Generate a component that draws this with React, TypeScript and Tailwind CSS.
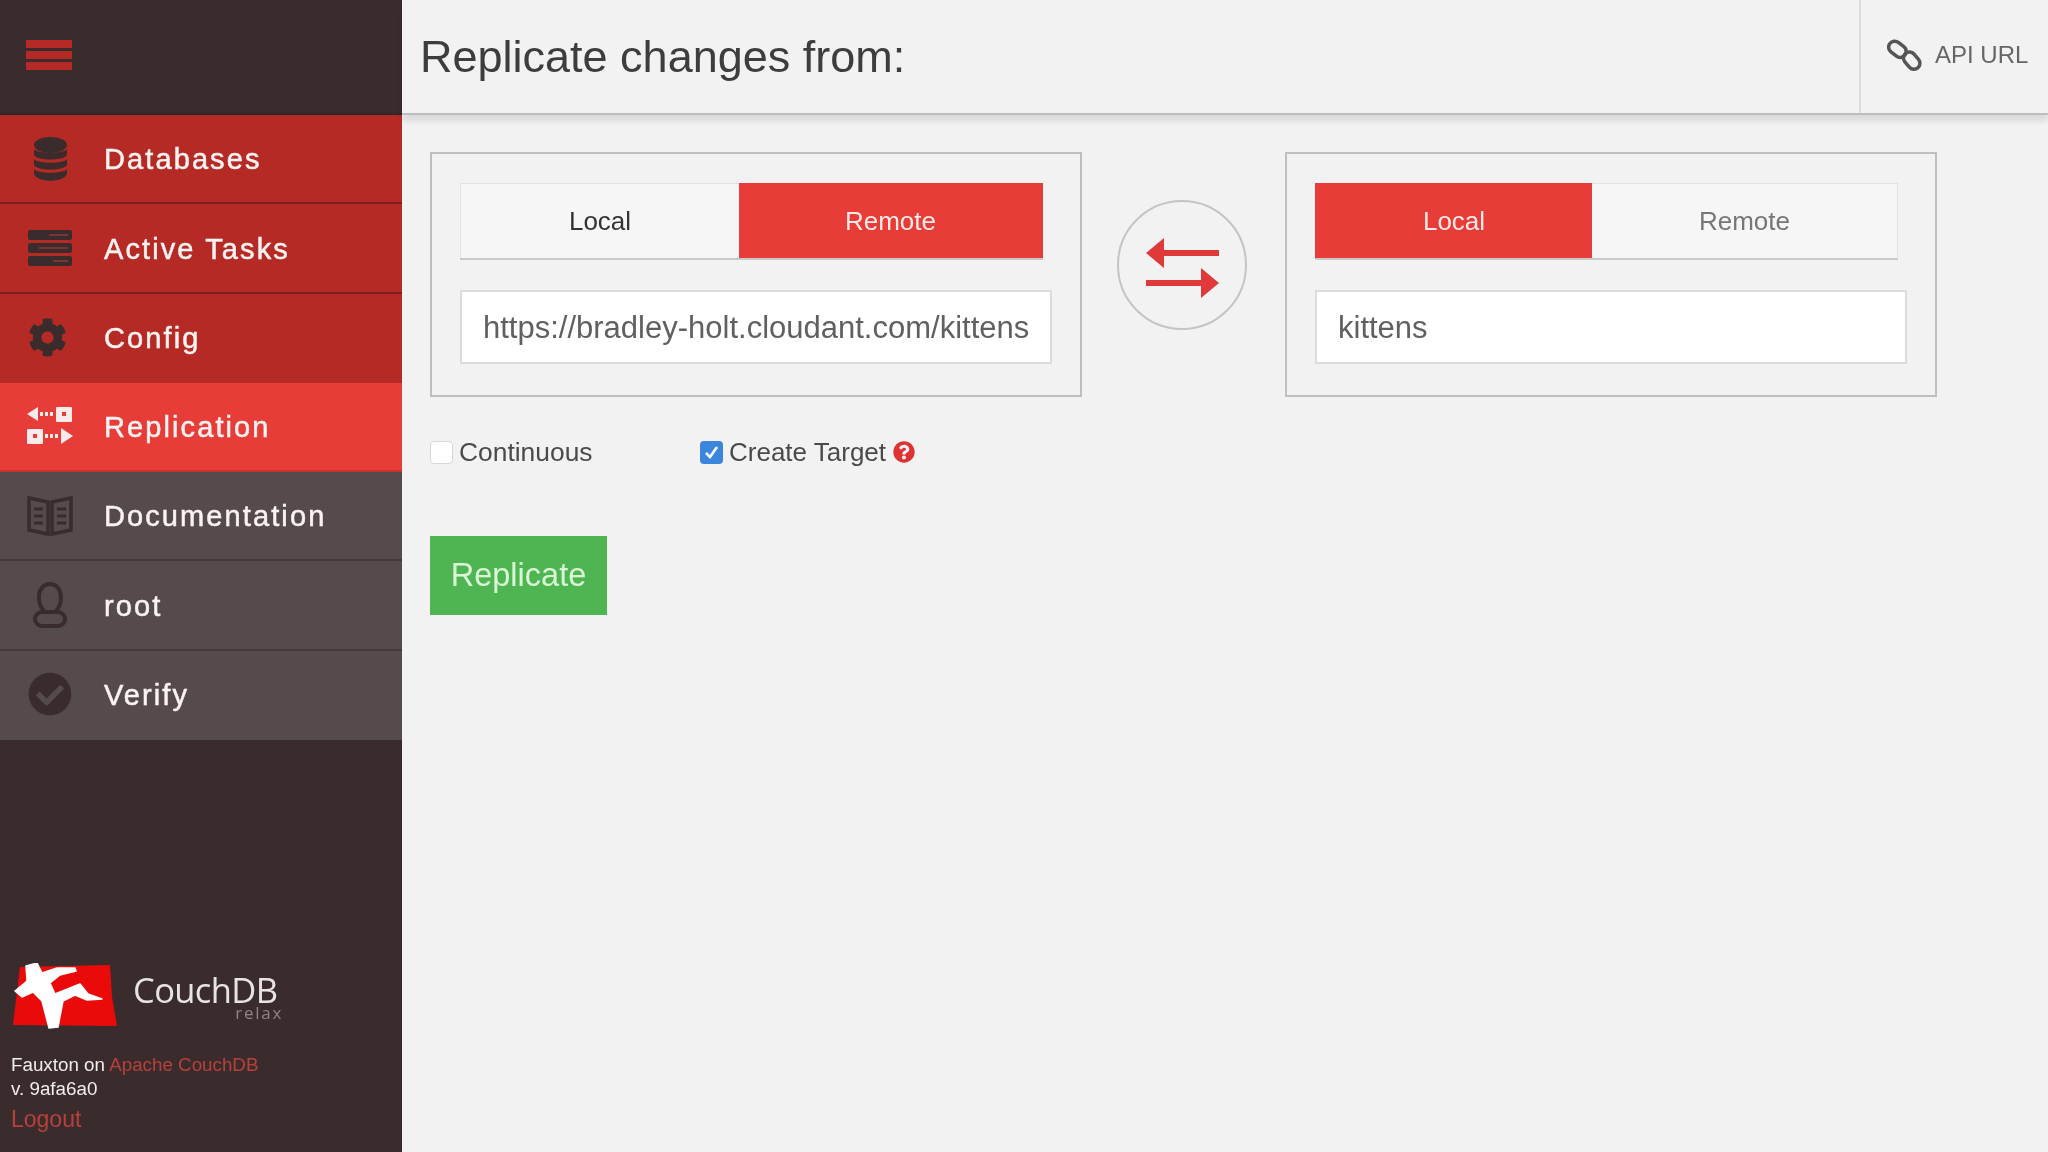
import type { ReactNode } from "react";
import { FaCheckCircle, FaCog, FaQuestionCircle } from "react-icons/fa";

const ink = "#3a2c2c";

function DatabaseIcon() {
  return (
    <svg width="33" height="44" viewBox="0 0 33 44" fill={ink}>
      <ellipse cx="16.5" cy="8" rx="16.5" ry="8" />
      <path d="M0 12c3 5 30 5 33 0v6c-3 6-30 6-33 0z" />
      <path d="M0 22c3 5 30 5 33 0v6c-3 6-30 6-33 0z" />
      <path d="M0 32c3 5 30 5 33 0v5c-3 9-30 9-33 0z" />
    </svg>
  );
}

function TasksIcon() {
  return (
    <svg width="46" height="36" viewBox="0 0 46 36" fill={ink}>
      <rect x="1" y="0" width="44" height="10" rx="2" />
      <rect x="1" y="13" width="44" height="10" rx="2" />
      <rect x="1" y="26" width="44" height="10" rx="2" />
      <path d="M22 5h19M12 18h29M26 31h15" stroke="#8f3a34" strokeWidth="1.5" />
    </svg>
  );
}

function ReplicationIcon() {
  return (
    <svg width="46" height="38" viewBox="0 0 46 38" fill="#fbeaea">
      <path d="M0 7 11 0v14z" />
      <rect x="29" y="0" width="16" height="15" rx="1" />
      <rect x="35" y="5" width="4" height="4" fill="#e73c37" />
      <path d="M13 7h14" stroke="#fbeaea" strokeWidth="4" strokeDasharray="3 2" />
      <rect x="0" y="22" width="16" height="15" rx="1" />
      <rect x="6" y="27" width="4" height="4" fill="#e73c37" />
      <path d="M18 29h14" stroke="#fbeaea" strokeWidth="4" strokeDasharray="3 2" />
      <path d="M46 29 34 21v16z" />
    </svg>
  );
}

function BookIcon() {
  return (
    <svg width="46" height="42" viewBox="0 0 46 42" fill="none" stroke={ink} strokeWidth="3.5">
      <path d="M2 3 21 7v32L2 35zM44 3 25 7v32l19-4z" />
      <path d="M7 14h9M7 21h9M7 28h9M30 14h9M30 21h9M30 28h9" strokeWidth="3" />
    </svg>
  );
}

function UserIcon() {
  return (
    <svg width="36" height="46" viewBox="0 0 36 46" fill="none" stroke={ink} strokeWidth="4">
      <path d="M12 29c-3-3-5-8-5-14C7 7 12 2 18 2s11 5 11 13c0 6-2 11-5 14" />
      <rect x="3" y="30" width="30" height="14" rx="7" />
    </svg>
  );
}

function NavItem({ icon, label, bg, border }: { icon: ReactNode; label: string; bg: string; border: string }) {
  return (
    <div className={`h-[89.25px] flex items-center border-b-2 ${bg} ${border}`}>
      <div className="w-[104px] flex justify-center pr-[4px] flex-shrink-0">{icon}</div>
      <span className="text-[#fbf3f1] text-[29px] tracking-[2.1px] pt-[3px] [-webkit-text-stroke:0.5px_#fbf3f1]">{label}</span>
    </div>
  );
}

function CouchLogo() {
  return (
    <div className="flex items-start pl-[13px]">
      <svg width="106" height="68" viewBox="0 0 106 68">
        <path d="M7 4 97 2l2 32 5 29-104-1z" fill="#ea0a0a" />
        <path
          d="M13 3 24 0l5 10 15-5 18 0 1 3-16 4-10 8 5 11 25-10 8 10 14 5-15 1-12-5-12 6-5 26-9 1-7-27-9-9-11 5-7-6 12-10z"
          fill="#ffffff"
          stroke="#ffffff"
          strokeWidth="1.5"
          strokeLinejoin="round"
        />
      </svg>
      <div className="ml-[14px] mt-[8px] w-[150px]">
        <div className="text-[34.5px] leading-[38px] font-['Open_Sans',sans-serif] text-[#e8e4e4] tracking-[-0.6px]">CouchDB</div>
        <div className="text-right text-[17px] leading-[14px] -mt-[3px] tracking-[1.7px] text-[#8d8484] font-['Open_Sans',sans-serif]">relax</div>
      </div>
    </div>
  );
}

function Toggle({ active, widths }: { active: "Local" | "Remote"; widths: [string, string] }) {
  const on = "bg-[#e73c37] text-[#fde9e6] border-[#e73c37]";
  const off = "bg-[#f6f6f6] border-[#e2e2e2]";
  return (
    <div className="flex h-[77px] text-[26px] border-b-2 border-[#c9c9c9]">
      <div className={`flex items-center justify-center border-l border-t ${widths[0]} ${active === "Local" ? on : `${off} text-[#333333]`}`}>Local</div>
      <div className={`flex items-center justify-center border-r border-t ${widths[1]} ${active === "Remote" ? on : `${off} text-[#777777]`}`}>Remote</div>
    </div>
  );
}

function Panel({ active, value, widths, inputW, toggleW }: { active: "Local" | "Remote"; value: string; widths: [string, string]; inputW: string; toggleW: string }) {
  return (
    <div className="w-[652px] h-[245px] border-2 border-[#bfbfbf] pt-[29px] pl-[28px]">
      <div className={toggleW}>
        <Toggle active={active} widths={widths} />
      </div>
      <input
        readOnly
        value={value}
        className={`${inputW} mt-[30px] h-[74px] bg-white border-2 border-[#dcdcdc] px-[21px] pt-[2px] text-[31px] text-[#606060] block`}
      />
    </div>
  );
}

function SwapIcon() {
  return (
    <svg width="74" height="60" viewBox="0 0 74 60" fill="#e0393a">
      <path d="M0 15 18 0v12h55v6H18v12z" />
      <path d="M73 45 55 30v12H0v6h55v12z" />
    </svg>
  );
}

export default function App() {
  return (
    <div className="w-[2048px] h-[1152px] flex overflow-hidden bg-[#f2f2f3] font-['Liberation_Sans',Arial,sans-serif] blur-[0.7px]">
      <aside className="w-[402px] flex-shrink-0 flex flex-col bg-[#3a2c2c]">
        <div className="h-[115px] flex-shrink-0 flex items-center pl-[26px] border-b-2 border-[#2f2726]">
          <div className="w-[46px] flex flex-col gap-[3px] -mt-[3px]">
            <div className="h-[8px] bg-[#b52a26]" />
            <div className="h-[8px] bg-[#b52a26]" />
            <div className="h-[8px] bg-[#b52a26]" />
          </div>
        </div>
        <NavItem label="Databases" bg="bg-[#b52a25]" border="border-[#7f1f1b]" icon={<DatabaseIcon />} />
        <NavItem label="Active Tasks" bg="bg-[#b52a25]" border="border-[#7f1f1b]" icon={<TasksIcon />} />
        <NavItem label="Config" bg="bg-[#b52a25]" border="border-[#b52a25]" icon={<FaCog size={39} color={ink} className="-ml-[6px]" />} />
        <NavItem label="Replication" bg="bg-[#e73c37]" border="border-[#c6362f]" icon={<ReplicationIcon />} />
        <NavItem label="Documentation" bg="bg-[#554b4c]" border="border-[#443a3b]" icon={<BookIcon />} />
        <NavItem label="root" bg="bg-[#554b4c]" border="border-[#443a3b]" icon={<UserIcon />} />
        <NavItem label="Verify" bg="bg-[#554b4c]" border="border-[#554b4c]" icon={<FaCheckCircle size={44} color={ink} />} />

        <div className="mt-auto pb-[21px]">
          <CouchLogo />
          <div className="mt-[22px] pl-[11px] text-[18.8px] leading-[24px] text-[#f1eded]">
            <div>
              Fauxton on <span className="text-[#b8403b]">Apache CouchDB</span>
            </div>
            <div>v. 9afa6a0</div>
            <div className="mt-[6px] text-[23px] text-[#b8403b]">Logout</div>
          </div>
        </div>
      </aside>

      <main className="flex-1 flex flex-col min-w-0">
        <header className="h-[115px] flex-shrink-0 flex bg-[#f1f2f1] border-b-2 border-[#bdbdbd] shadow-[0_6px_6px_rgba(0,0,0,0.10)]">
          <h1 className="flex-1 flex items-center pl-[18px] text-[45px] text-[#3d3d3d]">Replicate changes from:</h1>
          <div className="w-[189px] border-l-2 border-[#dcdcdc] flex items-center pl-[26px] gap-[12px] text-[24px] text-[#666666] pb-[4px]">
            <svg width="36" height="36" viewBox="0 0 36 36" fill="none" stroke="#555555" strokeWidth="3.5">
              <rect x="1" y="6" width="19" height="12" rx="6" transform="rotate(38 10 12)" />
              <rect x="15" y="18" width="19" height="12" rx="6" transform="rotate(50 25 24)" />
            </svg>
            API URL
          </div>
        </header>

        <div className="pl-[28px] pt-[37px]">
          <div className="flex items-start">
            <Panel
              active="Remote"
              value="https://bradley-holt.cloudant.com/kittens"
              widths={["w-[279px]", "w-[304px]"]}
              toggleW="w-[583px]"
              inputW="w-[592px]"
            />
            <div className="w-[130px] h-[130px] mt-[48px] ml-[35px] mr-[38px] pt-[6px] pl-[2px] rounded-full border-2 border-[#c4c4c4] flex items-center justify-center flex-shrink-0">
              <SwapIcon />
            </div>
            <Panel
              active="Local"
              value="kittens"
              widths={["w-[277px]", "w-[306px]"]}
              toggleW="w-[583px]"
              inputW="w-[592px]"
            />
          </div>

          <div className="flex items-center mt-[40px] h-[30px] text-[26.4px] text-[#4a4a4a]">
            <div className="w-[23px] h-[23px] rounded-[4px] bg-white border border-[#d8d8d8]" />
            <span className="ml-[6px] w-[241px] pt-[2px]">Continuous</span>
            <div className="w-[23px] h-[23px] rounded-[4px] bg-[#3b86dd] flex items-center justify-center">
              <svg width="17" height="17" viewBox="0 0 17 17" fill="none" stroke="#ffffff" strokeWidth="2.6">
                <path d="M3 9l4 4 7-10" />
              </svg>
            </div>
            <span className="ml-[6px] text-[26px]">Create Target</span>
            <FaQuestionCircle size={22} color="#dd3333" className="ml-[7px]" />
          </div>

          <button className="mt-[69px] w-[177px] h-[79px] bg-[#4fb553] text-[32.5px] text-[#d9f7d4]">Replicate</button>
        </div>
      </main>
    </div>
  );
}
